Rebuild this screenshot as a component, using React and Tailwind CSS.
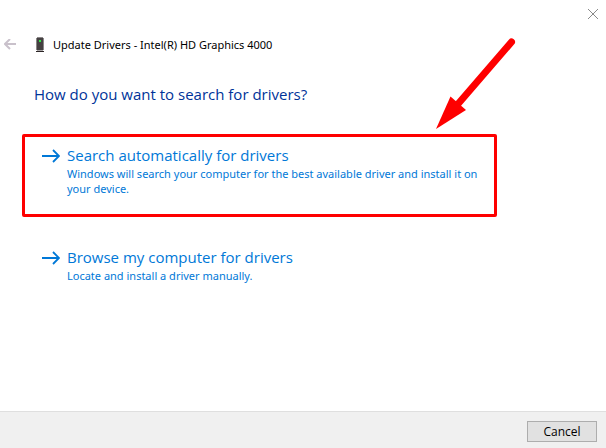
/**
 * Update Drivers wizard
 * Search method step
 */

const OPTIONS = [
  {
    id: 'auto',
    title: 'Search automatically for drivers',
    description:
      'Windows will search your computer for the best available driver and install it on your device.',
    highlighted: true,
  },
  {
    id: 'manual',
    title: 'Browse my computer for drivers',
    description: 'Locate and install a driver manually.',
    highlighted: false,
  },
];

const CloseIcon = () => (
  <svg className="h-3 w-3" viewBox="0 0 12 12" fill="none" stroke="#8a8a8a" aria-hidden="true">
    <path d="M1 1l10 10M11 1L1 11" />
  </svg>
);

const BackIcon = () => (
  <svg className="h-3 w-3" viewBox="0 0 12 12" fill="none" stroke="#c9c1cb" strokeWidth="2" aria-hidden="true">
    <path d="M1 5h11M6 0L1 5l5 5" />
  </svg>
);

const DeviceIcon = () => (
  <svg className="h-4 w-2" viewBox="0 0 8 16" shapeRendering="crispEdges" aria-hidden="true">
    <path d="M0 1h1V0h6v1h1v12H0z" fill="#8b8788" />
    <path d="M1 1h6v12H1z" fill="#454041" />
    <path d="M3 3h2v2H3z" fill="#2fe645" />
    <path d="M1 13h6v1H1z" fill="#a9a5a6" />
    <path d="M0 14h8v1H0z" fill="#2b2526" />
  </svg>
);

const OptionArrow = () => (
  <svg className="h-[22px] w-[18px] shrink-0" viewBox="0 0 18 22" fill="none" stroke="#0078d7" strokeWidth="1.8" aria-hidden="true">
    <path d="M0 11h17M11 5l6 6-6 6" />
  </svg>
);

const Pointer = () => (
  <svg className="pointer-events-none absolute top-9 right-[88px] h-24 w-[84px]" viewBox="0 0 84 96" aria-hidden="true">
    <path d="M77.500 6L24 68" stroke="#fe0000" strokeWidth="7" strokeLinecap="round" />
    <path d="M2 93L16.500 60.500l15.500 13.500z" fill="#fe0000" />
  </svg>
);

const SearchOption = ({ title, description, highlighted }) => (
  <button
    type="button"
    className={`flex w-full items-start gap-[7px] rounded-xs border-3 pt-2 pb-[18px] pl-[17px] pr-2 text-left text-[#0078d7] ${highlighted ? 'border-[#fe0000]' : 'border-transparent'}`}
  >
    <OptionArrow />
    <span>
      <span className="block text-[15px] leading-[21px]">{title}</span>
      <span className="block font-['Noto_Sans',sans-serif] text-[11px] leading-[15px]">{description}</span>
    </span>
  </button>
);

const App = () => (
  <div className="relative flex min-h-screen flex-col bg-white font-['Open_Sans','Noto_Sans',sans-serif] text-black">
    <div className="flex h-7 items-center justify-end pr-[7px]">
      <button type="button" aria-label="Close">
        <CloseIcon />
      </button>
    </div>

    <header className="flex h-[34px] items-center pl-1">
      <button type="button" aria-label="Back" className="mr-5">
        <BackIcon />
      </button>
      <DeviceIcon />
      <span className="ml-[9px] font-['Noto_Sans',sans-serif] text-[11px] leading-4">
        Update Drivers - Intel(R) HD Graphics 4000
      </span>
    </header>

    <main className="flex-1 pt-[18px] pr-[109px] pl-[22px]">
      <h1 className="pl-3 text-[15px] leading-7 text-[#003399]">How do you want to search for drivers?</h1>
      <div className="mt-[26px] flex flex-col gap-[19px]">
        {OPTIONS.map(({ id, ...option }) => (
          <SearchOption key={id} {...option} />
        ))}
      </div>
    </main>

    <footer className="flex justify-end border-t border-[#dfdfdf] bg-[#f0f0f0] pt-[9px] pr-[9px] pb-[6px]">
      <button type="button" className="h-[21px] w-[70px] border border-[#adadad] bg-[#e1e1e1] text-[12px] leading-4">
        Cancel
      </button>
    </footer>

    <Pointer />
  </div>
);

export default App;
